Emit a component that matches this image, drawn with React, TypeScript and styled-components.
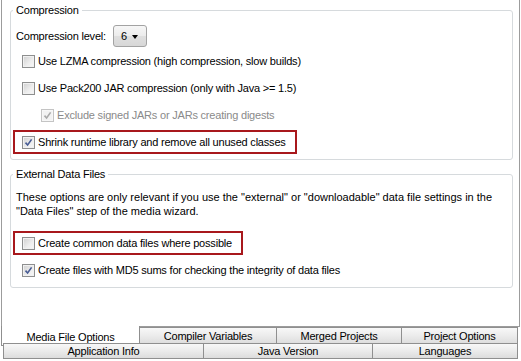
import React from 'react';
import styled, {createGlobalStyle} from 'styled-components';

const GlobalStyle = createGlobalStyle`
    body {
        margin: 0;
        background: #fff;
        font-family: "Liberation Sans", Arial, sans-serif;
        font-size: 11px;
        letter-spacing: -0.2px;
        color: #000;
    }
`;

const Page = styled.div`
    width: 521px;
    height: 361px;
    overflow: hidden;
`;

const Panel = styled.div`
    box-sizing: border-box;
    margin-left: 1px;
    width: 519px;
    height: 327px;
    padding-top: 3px;
    border: 1px solid #9c9c9c;
    border-top: none;
    background: #fff;
`;

const Group = styled.fieldset<{$gap?: number}>`
    margin: ${p => p.$gap || 0}px 6px 0 8px;
    padding: 0 2px 0 2px;
    min-width: 0;
    border: 1px solid #d6dadd;
    border-radius: 3px;
    display: flex;
    flex-direction: column;
    align-items: stretch;
`;

const Legend = styled.legend`
    padding: 0 3px;
    line-height: 14px;
`;

const Body = styled.div<{$top: number; $bottom: number}>`
    display: flex;
    flex-direction: column;
    padding: ${p => p.$top}px 0 ${p => p.$bottom}px 0;
`;

const LevelRow = styled.div`
    display: flex;
    align-items: center;
    gap: 7px;
    height: 22px;
    padding-left: 3px;
`;

const Combo = styled.div`
    box-sizing: border-box;
    display: flex;
    align-items: center;
    justify-content: space-between;
    width: 34px;
    height: 22px;
    padding: 0 8px 0 7px;
    border: 1px solid #a3a3a3;
    border-radius: 3px;
    background: linear-gradient(#f7f7f7, #ececec 48%, #dfdfdf 52%, #d7d7d7);
`;

const Arrow = styled.span`
    width: 0;
    height: 0;
    border-left: 3.5px solid transparent;
    border-right: 3.5px solid transparent;
    border-top: 4px solid #000;
    margin-top: 1px;
`;

const Row = styled.div<{$indent?: number; $height?: number; $top?: number}>`
    display: flex;
    align-items: center;
    gap: 2px;
    height: ${p => p.$height ?? 26}px;
    margin-top: ${p => p.$top ?? 1}px;
    padding-left: ${p => p.$indent ?? 9}px;
`;

const Label = styled.span<{$disabled?: boolean}>`
    color: ${p => p.$disabled ? '#8a8a8a' : '#000'};
    white-space: nowrap;
`;

const Highlight = styled.div<{$top: number}>`
    align-self: flex-start;
    box-sizing: border-box;
    height: 24px;
    margin-top: ${p => p.$top}px;
    padding: 0 9px 0 7px;
    border: 2px solid #a8181c;
    display: flex;
    align-items: center;
`;

const Box = styled.span<{$disabled?: boolean}>`
    box-sizing: border-box;
    flex: none;
    width: 13px;
    height: 13px;
    border: 1px solid ${p => p.$disabled ? '#c4c4c4' : '#8e8f8f'};
    box-shadow: inset 0 0 0 1px ${p => p.$disabled ? '#f7f7f7' : '#f1f1f1'};
    background: ${p => p.$disabled
        ? '#f2f2f2'
        : 'linear-gradient(135deg, #cfcfcf, #eeeeee 60%, #f8f8f8)'};
    display: flex;
    align-items: center;
    justify-content: center;
    margin-right: 1px;
`;

const Note = styled.p`
    margin: 0;
    padding-left: 3px;
    line-height: 14px;
    letter-spacing: 0;
`;

const TabStrip = styled.div`
    display: flex;
    flex-direction: column;
`;

const TabRow = styled.div<{$offset: number}>`
    display: flex;
    height: ${p => p.$offset ? 16 : 18}px;
    padding-left: ${p => p.$offset}px;
`;

const Tab = styled.div<{$width: number; $selected?: boolean; $first?: boolean}>`
    box-sizing: border-box;
    flex: none;
    width: ${p => p.$width}px;
    height: ${p => p.$selected ? 20 : 18}px;
    margin-top: ${p => p.$selected ? -1 : 0}px;
    display: flex;
    align-items: center;
    justify-content: center;
    padding-top: ${p => p.$selected ? 2 : 0}px;
    border: 1px solid #8f8f8f;
    border-left-width: ${p => p.$first ? 1 : 0}px;
    border-top-width: ${p => p.$selected ? 0 : 1}px;
    background: ${p => p.$selected ? '#fff' : 'linear-gradient(#f8f8f8, #ebebeb 50%, #dcdcdc)'};
    white-space: nowrap;
`;

const LowTab = styled(Tab)`
    height: 16px;
`;

const Check: React.FunctionComponent<{checked?: boolean; disabled?: boolean}> = ({checked, disabled}) => (
    <Box $disabled={disabled}>
        {checked && (
            <svg width="9" height="9" viewBox="0 0 9 9">
                <path d="M1.5 4.6 L3.6 7 L7.6 1.4" fill="none" stroke={disabled ? '#a9a9a9' : '#485c94'} strokeWidth="1.6"/>
            </svg>
        )}
    </Box>
);

const App: React.FunctionComponent = () => {
    return (
        <Page>
            <GlobalStyle/>
            <Panel>
                <Group>
                    <Legend>Compression</Legend>
                    <Body $top={8} $bottom={5}>
                        <LevelRow>
                            <Label>Compression level:</Label>
                            <Combo>6<Arrow/></Combo>
                        </LevelRow>
                        <Row>
                            <Check/>
                            <Label>Use LZMA compression (high compression, slow builds)</Label>
                        </Row>
                        <Row>
                            <Check/>
                            <Label>Use Pack200 JAR compression (only with Java &gt;= 1.5)</Label>
                        </Row>
                        <Row $indent={28}>
                            <Check checked disabled/>
                            <Label $disabled>Exclude signed JARs or JARs creating digests</Label>
                        </Row>
                        <Highlight $top={2}>
                            <Row $indent={0} $height={20} $top={0}>
                                <Check checked/>
                                <Label>Shrink runtime library and remove all unused classes</Label>
                            </Row>
                        </Highlight>
                    </Body>
                </Group>
                <Group $gap={7}>
                    <Legend>External Data Files</Legend>
                    <Body $top={9} $bottom={4}>
                        <Note>
                            These options are only relevant if you use the "external" or "downloadable" data file settings in the<br/>
                            "Data Files" step of the media wizard.
                        </Note>
                        <Highlight $top={13}>
                            <Row $indent={0} $height={20} $top={0}>
                                <Check/>
                                <Label>Create common data files where possible</Label>
                            </Row>
                        </Highlight>
                        <Row $top={2}>
                            <Check checked/>
                            <Label>Create files with MD5 sums for checking the integrity of data files</Label>
                        </Row>
                    </Body>
                </Group>
            </Panel>
            <TabStrip>
                <TabRow $offset={1}>
                    <Tab $width={139} $selected $first>Media File Options</Tab>
                    <Tab $width={137}>Compiler Variables</Tab>
                    <Tab $width={125}>Merged Projects</Tab>
                    <Tab $width={116}>Project Options</Tab>
                </TabRow>
                <TabRow $offset={3}>
                    <LowTab $width={201} $first>Application Info</LowTab>
                    <LowTab $width={169}>Java Version</LowTab>
                    <LowTab $width={145}>Languages</LowTab>
                </TabRow>
            </TabStrip>
        </Page>
    );
}

export default App;
